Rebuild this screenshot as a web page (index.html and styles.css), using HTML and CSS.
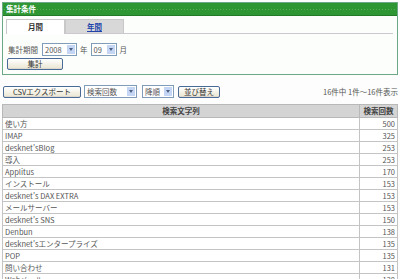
FILE: index.html
```html
<!DOCTYPE html>
<html lang="ja">
<head>
  <meta charset="UTF-8" />
  <title>検索ログ</title>
  <link rel="stylesheet" href="styles.css">
</head>
<body>
  <div class="panel">
    <div class="panel-head">集計条件</div>
    <div class="panel-body">
      <div class="tabs">
        <div class="tab active">月間</div>
        <div class="tab"><a href="#">年間</a></div>
      </div>
      <div class="period">
        <span class="label">集計期間</span>
        <span class="select w-year">2008<i class="arrow"></i></span>
        <span>年</span>
        <span class="select w-month">09<i class="arrow"></i></span>
        <span>月</span>
      </div>
      <button class="btn btn-sum">集計</button>
    </div>
  </div>

  <div class="toolbar">
    <button class="btn btn-csv">CSVエクスポート</button>
    <span class="select w-key">検索回数<i class="arrow"></i></span>
    <span class="select w-order">降順<i class="arrow"></i></span>
    <button class="btn btn-sort">並び替え</button>
    <span class="count">16件中 1件～16件表示</span>
  </div>

  <table class="list">
    <thead>
      <tr><th>検索文字列</th><th class="num-col">検索回数</th></tr>
    </thead>
    <tbody>
      <tr><td>使い方</td><td class="num">500</td></tr>
      <tr><td>IMAP</td><td class="num">325</td></tr>
      <tr><td>desknet'sBlog</td><td class="num">253</td></tr>
      <tr><td>導入</td><td class="num">253</td></tr>
      <tr><td>Applitus</td><td class="num">170</td></tr>
      <tr><td>インストール</td><td class="num">153</td></tr>
      <tr><td>desknet's DAX EXTRA</td><td class="num">153</td></tr>
      <tr><td>メールサーバー</td><td class="num">153</td></tr>
      <tr><td>desknet's SNS</td><td class="num">150</td></tr>
      <tr><td>Denbun</td><td class="num">138</td></tr>
      <tr><td>desknet'sエンタープライズ</td><td class="num">135</td></tr>
      <tr><td>POP</td><td class="num">135</td></tr>
      <tr><td>問い合わせ</td><td class="num">131</td></tr>
      <tr><td>Webメール</td><td class="num">128</td></tr>
    </tbody>
  </table>
</body>
</html>
```

FILE: styles.css
```css
body {
  margin: 0;
  background: #fcfdfc;
  font-family: "Noto Sans CJK JP", "DejaVu Sans", sans-serif;
  font-size: 7.5px;
  color: #555;
  line-height: 1;
}

.panel {
  margin: 2px 2px 0 2px;
  border: 1px solid #6aa886;
  background: #fcfefc;
}

.panel-head {
  height: 12px;
  line-height: 12px;
  padding-left: 3px;
  background-color: #2e9632;
  background-image: radial-gradient(circle, #57ad55 0.6px, transparent 0.8px);
  background-size: 3px 3px;
  background-position: 0 5px;
  background-repeat: repeat-x;
  border-bottom: 1px solid #237a28;
  color: #fff;
  font-weight: bold;
}

.panel-body {
  padding: 3px 3px 4px 3px;
}

.tabs {
  display: flex;
  border-bottom: 1px solid #cdc8d0;
  margin-right: 1px;
}

.tab {
  width: 57px;
  height: 13px;
  line-height: 13px;
  text-align: center;
  font-weight: bold;
  background: #d8d8d8;
  border: 1px solid #c8c8c8;
  border-bottom: none;
  color: #333;
}
.tab.active {
  background: #fff;
  margin-bottom: -1px;
  height: 14px;
}
.tab a {
  color: #2244aa;
  text-decoration: underline;
}

.period {
  display: flex;
  align-items: center;
  gap: 3px;
  margin-top: 9px;
  margin-left: 2px;
}
.period .label {
  margin-right: 1px;
}

.select {
  position: relative;
  display: inline-block;
  height: 11px;
  line-height: 11px;
  padding-left: 2px;
  border: 1px solid #7f9db9;
  background: #fff;
  box-sizing: content-box;
}
.arrow {
  position: absolute;
  right: 1px;
  top: 1px;
  width: 8px;
  height: 9px;
  background: #c4d6f4;
}
.arrow::after {
  content: "";
  position: absolute;
  left: 2px;
  top: 3px;
  border-left: 2px solid transparent;
  border-right: 2px solid transparent;
  border-top: 3px solid #4d6185;
}
.w-year { width: 31px; }
.w-month { width: 22px; }
.w-key { width: 49px; }
.w-order { width: 28px; }

.btn {
  font-family: inherit;
  font-size: 7.5px;
  color: #333;
  height: 12px;
  padding: 0;
  border: 1px solid #4a6a98;
  border-radius: 2px;
  background: linear-gradient(#ffffff, #ece9d8 85%, #d6d0c5);
  line-height: 10px;
}
.btn-sum {
  width: 56px;
  margin-top: 2px;
  margin-left: 1px;
  display: block;
}

.toolbar {
  display: flex;
  align-items: center;
  gap: 3px;
  margin: 10px 2px 0 3px;
  height: 13px;
}
.btn-csv { width: 78px; }
.btn-sort { width: 42px; margin-left: 1px; }
.w-order { margin-left: 2px; }
.count {
  margin-left: auto;
}

.list {
  margin: 6px 2px 0 2px;
  width: 396px;
  border-collapse: collapse;
  background: #fff;
}
.list th {
  background: #d4d4d4;
  height: 12px;
  font-weight: bold;
  color: #444;
  border: 1px solid #b8b8b8;
  padding: 0;
}
.list td {
  height: 11px;
  border: 1px solid #c4c4c4;
  padding: 0 2px;
}
.list .num-col {
  width: 37px;
}
.list .num {
  text-align: right;
}
```
